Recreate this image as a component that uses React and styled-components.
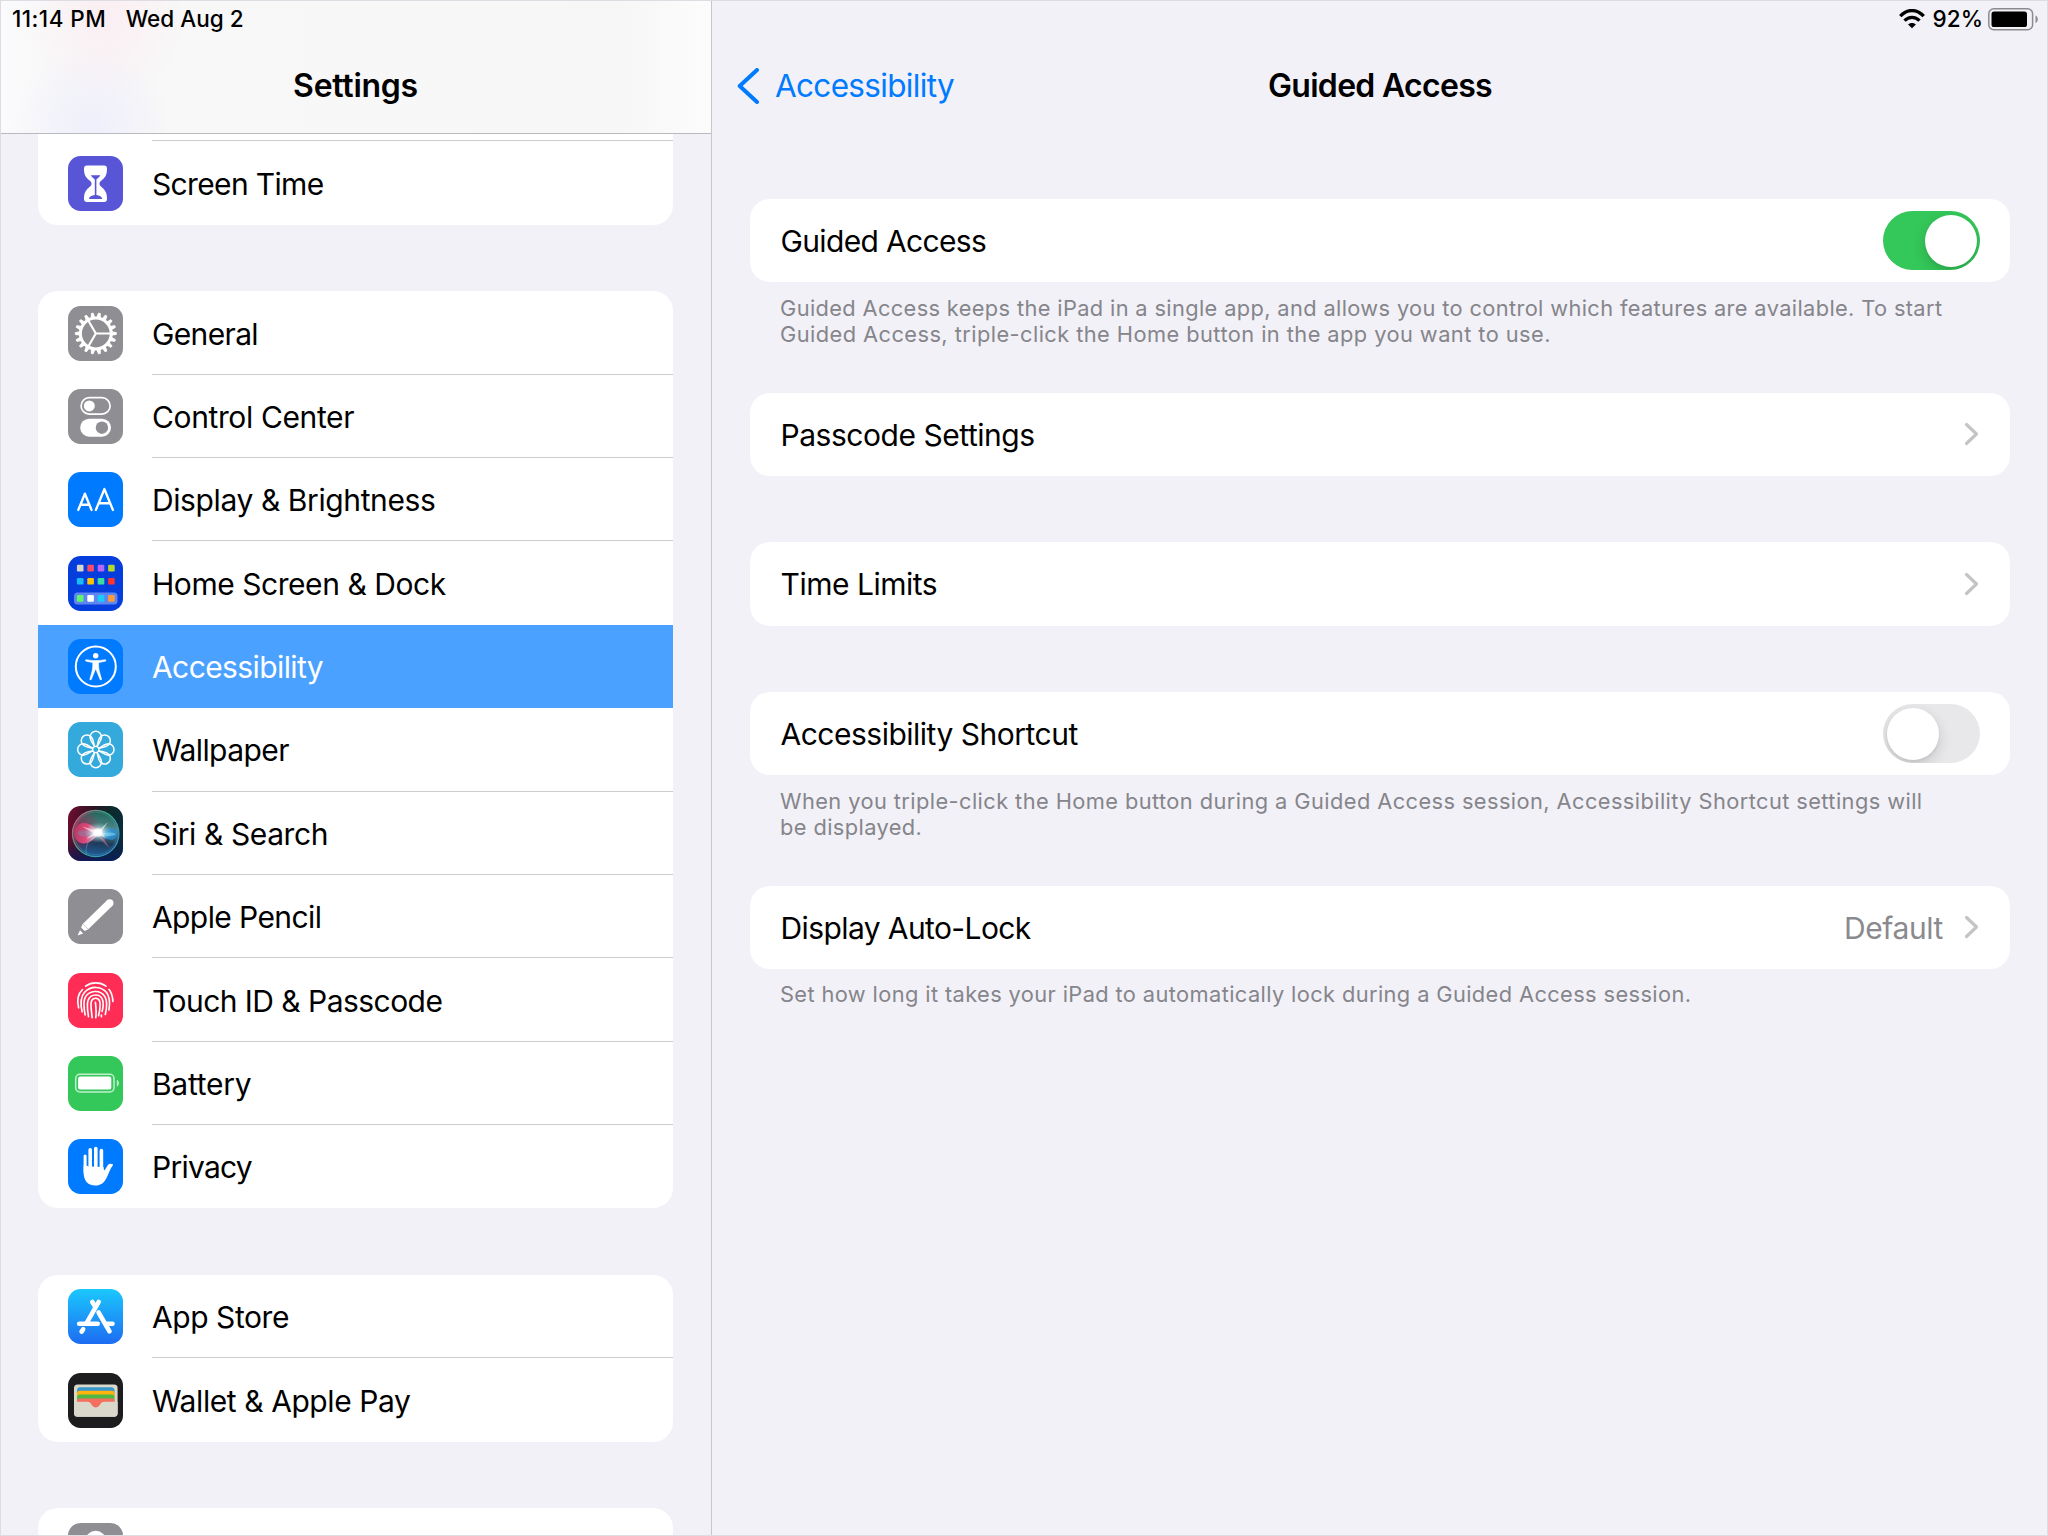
import React from 'react';
import styled, { createGlobalStyle } from 'styled-components';

const GlobalStyle = createGlobalStyle`
  *, *::before, *::after { box-sizing: border-box; }
  html, body { margin: 0; padding: 0; background: #f2f1f7; }
  body { font-family: Inter, "Noto Sans", "Liberation Sans", sans-serif; color: #000; }
`;

const Screen = styled.div`
  position: relative;
  display: flex;
  width: 2048px;
  height: 1536px;
  overflow: hidden;
  background: #f2f1f7;
`;

const ScreenEdge = styled.div`
  position: absolute;
  inset: 0;
  border: 1px solid #dddce3;
  pointer-events: none;
`;

const Sidebar = styled.aside`
  display: flex;
  flex-direction: column;
  flex: none;
  width: 712px;
  height: 1536px;
  border-right: 1px solid #c6c6cb;
  overflow: hidden;
`;

const SidebarHeader = styled.header`
  flex: none;
  height: 134px;
  border-bottom: 1px solid #b9b9be;
  background:
    radial-gradient(ellipse 80px 90px at 105px 14px, rgba(255, 225, 236, 0.42), rgba(255, 225, 236, 0)),
    radial-gradient(ellipse 80px 80px at 92px 126px, rgba(226, 228, 255, 0.45), rgba(226, 228, 255, 0)),
    linear-gradient(90deg, #fbfafc 0, #f8f8f8 60px, #f7f7f7 620px, #fcfcfc 711px);
`;

const StatusBar = styled.div`
  display: flex;
  align-items: center;
  height: 38px;
  padding: ${(p) => (p.$end ? '0 9px 0 0' : '0 0 0 12px')};
  justify-content: ${(p) => (p.$end ? 'flex-end' : 'flex-start')};
  font-size: 22.5px;
  font-weight: 500;
  line-height: 38px;
`;

const StatusText = styled.span`
  letter-spacing: ${(p) => p.$tracking || 0}px;
  margin-left: ${(p) => p.$before || 0}px;
  margin-right: ${(p) => p.$gap || 0}px;
  white-space: nowrap;
`;

const NavTitle = styled.h1`
  margin: 0;
  font-size: 32px;
  font-weight: 600;
  line-height: 95px;
  letter-spacing: ${(p) => p.$tracking || 0}px;
  text-align: center;
  white-space: nowrap;
`;

const GroupList = styled.div`
  display: flex;
  flex-direction: column;
  gap: 66.6px;
  padding: 0 38px;
`;

const Clip = styled.div`
  flex: 1;
  min-height: 0;
  overflow: hidden;
`;

const Card = styled.section`
  flex: none;
  overflow: hidden;
  background: #fff;
  border-radius: ${(p) => (p.$cut ? '0 0 20px 20px' : '20px')};
  padding-top: ${(p) => (p.$cut ? '7.4px' : '0')};
`;

const Item = styled.div`
  display: flex;
  align-items: center;
  height: 83.38px;
  padding-left: 30px;
  background: ${(p) => (p.$selected ? '#4ba1ff' : 'transparent')};
  color: ${(p) => (p.$selected ? '#fff' : '#000')};
`;

const ItemBody = styled.div`
  display: flex;
  align-items: center;
  flex: 1;
  height: calc(100% + 2px);
  margin: -1px 0 -1px 29px;
  border-top: 1px solid ${(p) => (p.$line ? '#cbcbcd' : 'transparent')};
`;

const Label = styled.span`
  font-size: ${(p) => p.$size || 30}px;
  line-height: 40px;
  letter-spacing: ${(p) => p.$tracking || 0}px;
  white-space: nowrap;
`;

const Detail = styled.main`
  display: flex;
  flex-direction: column;
  flex: 1;
  min-width: 0;
`;

const NavBar = styled.nav`
  display: grid;
  grid-template-columns: 1fr auto 1fr;
  align-items: center;
  height: 95px;
  padding: 0 25px;
`;

const Back = styled.div`
  display: flex;
  align-items: center;
  gap: 15px;
  color: #007aff;
`;

const Settings = styled.div`
  display: flex;
  flex-direction: column;
  padding: 66px 38px 0;
`;

const Setting = styled.section`
  display: flex;
  flex-direction: column;
  height: ${(p) => p.$height}px;
`;

const SettingRow = styled.div`
  display: flex;
  align-items: center;
  justify-content: space-between;
  flex: none;
  height: 83.4px;
  padding: 0 30px 0 30.5px;
  background: #fff;
  border-radius: 20px;
`;

const SettingLabel = styled(Label)`
  padding-top: 1px;
`;

const Trailing = styled.div`
  display: flex;
  align-items: center;
  gap: 21px;
  padding-right: 1px;
  color: #8a8a8e;
`;

const Footer = styled.p`
  margin: 0;
  padding: 12.5px 0 0 30px;
  color: #85858b;
  font-size: 21.8px;
  line-height: 26.6px;
`;

const FooterLine = styled.span`
  display: block;
  letter-spacing: ${(p) => p.$tracking || 0}px;
  white-space: nowrap;
`;

const Track = styled.div`
  display: flex;
  justify-content: ${(p) => (p.$on ? 'flex-end' : 'flex-start')};
  width: 97px;
  height: 59px;
  padding: 3.5px;
  border-radius: 30px;
  overflow: hidden;
  background: ${(p) => (p.$on ? '#34c759' : '#e8e8ea')};
`;

const Knob = styled.div`
  width: 52px;
  height: 52px;
  border-radius: 50%;
  background: #fff;
  box-shadow: 0 5px 14px rgba(0, 0, 0, 0.15), 0 2px 3px rgba(0, 0, 0, 0.06);
`;

const IconSvg = styled.svg`
  flex: none;
  display: block;
`;

function Tile({ fill, children }) {
  return (
    <IconSvg width="55" height="55" viewBox="0 0 55 55" fill="none">
      <rect width="55" height="55" rx="12.5" fill={fill} />
      {children}
    </IconSvg>
  );
}

const range = (n) => Array.from({ length: n }, (_, i) => i);

const ScreenTimeIcon = () => (
  <Tile fill="#5856d6">
    <path
      fill="#fff"
      d="M19 9.5h17c2 0 3 1.200 3 3 0 6-1.500 8.500-5 11.500-2 1.700-2.500 2.300-2.500 3.700s.5 2 2.500 3.700c3.500 3 5 5.500 5 11.500 0 1.800-1 3-3 3H19c-2 0-3-1.200-3-3 0-6 1.500-8.500 5-11.500 2-1.700 2.500-2.300 2.500-3.700s-.5-2-2.500-3.700c-3.500-3-5-5.500-5-11.500 0-1.800 1-3 3-3z"
    />
    <path fill="#5856d6" d="M22.800 19.300h9.600c-.8 1.600-1.900 2.500-4 4.300v15.300c3.300.5 5.200 1.400 5.900 4H20.900c.7-2.600 2.600-3.500 5.900-4V23.600c-2.100-1.800-3.200-2.700-4-4.300z" />
  </Tile>
);

const GeneralIcon = () => (
  <Tile fill="#8e8e93">
    <g stroke="#fff" transform="translate(27.800 27.500)">
      <circle r="15.400" strokeWidth="3" />
      {range(18).map((i) => (
        <path key={i} d="M16-1.700l4.500.8v1.800l-4.500.8z" fill="#fff" strokeWidth=".9" strokeLinejoin="round" transform={`rotate(${i * 20})`} />
      ))}
      {range(3).map((i) => (
        <path key={i} d="M0 0H15" strokeWidth="2.200" transform={`rotate(${i * 120})`} />
      ))}
    </g>
  </Tile>
);

const ControlIcon = () => (
  <Tile fill="#8e8e93">
    <rect x="13.100" y="8.700" width="29" height="16.400" rx="8.200" stroke="#fff" strokeWidth="1.700" />
    <circle cx="21.300" cy="16.900" r="5.500" fill="#fff" />
    <rect x="12.200" y="29.700" width="30.800" height="18" rx="9" fill="#fff" />
    <circle cx="33.900" cy="38.700" r="6.200" fill="#8e8e93" />
  </Tile>
);

const DisplayIcon = () => (
  <Tile fill="#007aff">
    <g stroke="#fff" strokeLinecap="round" strokeLinejoin="round">
      <path d="M10.300 37.900l6.600-16.200 6.600 16.200M12.600 32.700h8.600" strokeWidth="2.400" />
      <path d="M27.900 37.900l8.500-20.800 8.500 20.800M30.800 31.300h11.200" strokeWidth="2.400" />
    </g>
  </Tile>
);

const DOCK = ['#5ff56c', '#fff', '#18cdfd', '#ff9a3c'];
const APPS = ['#d9d6cc', '#ff4b63', '#b765fb', '#b3d82f', '#17bdfb', '#ffc400', '#3cdca0', '#ff352d'];

const HomeIcon = () => (
  <Tile fill="#063ede">
    <rect x="6" y="36.500" width="43.500" height="12" rx="3.500" fill="#5d86f0" />
    {APPS.map((c, i) => (
      <rect key={i} x={8.900 + (i % 4) * 10.400} y={i < 4 ? 8.800 : 22} width="6.600" height="6.600" rx="1.200" fill={c} />
    ))}
    {DOCK.map((c, i) => (
      <rect key={i} x={8.900 + i * 10.400} y="39.100" width="6.600" height="6.600" rx="1.200" fill={c} />
    ))}
  </Tile>
);

const AccessibilityIcon = () => (
  <Tile fill="#007aff">
    <circle cx="27.800" cy="27.500" r="20" stroke="#fff" strokeWidth="2" />
    <circle cx="27.700" cy="16.800" r="2.700" fill="#fff" />
    <path
      fill="#fff"
      stroke="#fff"
      strokeWidth=".6"
      strokeLinejoin="round"
      d="M18.300 20.700c3.300.5 6.200.9 9.400.9s6.100-.4 9.400-.9c1-.1 1.200 1.300.2 1.500l-6 1.200c-.5.1-.7.400-.7.900 0 3.700.3 6.500 1.200 9.700l1.700 6c.3 1-1 1.400-1.400.4l-3.900-9.500c-.2-.5-.8-.5-1 0l-3.900 9.500c-.4 1-1.700.6-1.400-.4l1.700-6c.9-3.200 1.200-6 1.200-9.700 0-.5-.2-.8-.7-.9l-6-1.200c-1-.2-.8-1.600.2-1.500z"
    />
  </Tile>
);

const WallpaperIcon = () => (
  <Tile fill="#34aadc">
    <g stroke="#fff" strokeWidth="1.500" transform="translate(27.800 27.500)">
      {range(8).map((i) => (
        <path
          key={i}
          d="M-1.200-2.800C-2.200-5.500-5.700-8.800-5.700-12.500a5.700 5.700 0 0 1 11.400 0C5.700-8.800 2.200-5.500 1.200-2.800"
          transform={`rotate(${i * 45})`}
        />
      ))}
      <circle r="3.100" strokeWidth="1.300" />
    </g>
  </Tile>
);

const SiriIcon = () => (
  <IconSvg width="55" height="55" viewBox="0 0 55 55" fill="none">
    <defs>
      <linearGradient id="siriBack" x1="0" y1=".3" x2="1" y2=".5">
        <stop offset="0" stopColor="#6b0d2e" />
        <stop offset=".4" stopColor="#2b1424" />
        <stop offset=".7" stopColor="#0b2a2b" />
        <stop offset="1" stopColor="#0b2c3b" />
      </linearGradient>
      <linearGradient id="siriFoot" x1="0" y1="0" x2="0" y2="1">
        <stop offset=".6" stopColor="#06194f" stopOpacity="0" />
        <stop offset="1" stopColor="#0b1a66" stopOpacity=".75" />
      </linearGradient>
      <linearGradient id="siriOrb" x1=".55" y1="0" x2=".45" y2="1">
        <stop offset="0" stopColor="#1b6256" />
        <stop offset=".4" stopColor="#55888a" />
        <stop offset=".7" stopColor="#1c3c5a" />
        <stop offset="1" stopColor="#225f9e" />
      </linearGradient>
      <linearGradient id="siriRing" x1="0" y1=".2" x2="1" y2=".8">
        <stop offset="0" stopColor="#c9627f" />
        <stop offset=".5" stopColor="#38a98d" />
        <stop offset="1" stopColor="#3b8fd6" />
      </linearGradient>
      <radialGradient id="siriBlush" cx=".12" cy=".4" r=".5">
        <stop offset="0" stopColor="#96224c" stopOpacity=".95" />
        <stop offset="1" stopColor="#96224c" stopOpacity="0" />
      </radialGradient>
      <linearGradient id="siriPink" x1="0" y1=".4" x2="1" y2=".6">
        <stop offset="0" stopColor="#c03a66" />
        <stop offset=".5" stopColor="#ea4a7c" />
        <stop offset="1" stopColor="#ffc3d6" />
      </linearGradient>
      <radialGradient id="siriGlow">
        <stop offset="0" stopColor="#fff" />
        <stop offset=".25" stopColor="#fff" stopOpacity=".9" />
        <stop offset=".6" stopColor="#d6f4f5" stopOpacity=".35" />
        <stop offset="1" stopColor="#9fe3e8" stopOpacity="0" />
      </radialGradient>
    </defs>
    <rect width="55" height="55" rx="12.500" fill="url(#siriBack)" />
    <rect width="55" height="55" rx="12.500" fill="url(#siriFoot)" />
    <circle cx="27.700" cy="27.500" r="23.200" fill="url(#siriOrb)" />
    <circle cx="27.700" cy="27.500" r="23.200" fill="url(#siriBlush)" stroke="url(#siriRing)" strokeWidth="1.300" />
    <circle cx="27.700" cy="27.500" r="21.300" stroke="url(#siriRing)" strokeWidth=".7" opacity=".6" />
    <path d="M31 27c-5-7-12-11.500-18-9.500-9.500 3.500-8.500 19.500 2.500 20 6.500.2 11-5 15.500-10.500z" fill="url(#siriPink)" opacity=".9" />
    <path d="M9 27c2.500-4 12-3 20 0-6 4-16 6-20 0z" fill="#5aa9c4" opacity=".35" />
    <path d="M30 27.500c5 0 8-5.500 13-5.500 6 0 7.500 6.500 4.500 10-4 4-10 1-17.500-4.500z" fill="#2a92e0" opacity=".75" />
    <path d="M30 27.500c5 .8 11-2.800 18 .4-5 3.500-11 2.500-18-.4z" fill="#78daf5" opacity=".6" />
    <path d="M27 29C19 34 17 43 18.500 48.500" stroke="#4f9ad8" strokeWidth="1" opacity=".6" />
    <path d="M30 28l6 5 5.500 9-8.500-8z" fill="#c06a94" opacity=".65" />
    <ellipse cx="30" cy="26.500" rx="14" ry="10" fill="url(#siriGlow)" />
    <path d="M14 20.500l16 4.500 10-9-6.500 9.500 4 6.500-7.500-3.500-12 4.500 7.500-6z" fill="#fff" opacity=".55" />
    <circle cx="30" cy="26.500" r="4" fill="#fff" opacity=".7" />
  </IconSvg>
);

const PencilIcon = () => (
  <Tile fill="#8e8e93">
    <path d="M17.600 37.500L41.500 14.200" stroke="#fff" strokeWidth="7.600" />
    <circle cx="41.700" cy="14.100" r="3.800" fill="#fff" />
    <path fill="#fff" d="M14.700 34.800l5.400 5.600-3.500 1.700-3.500-3.600zM12 41.200l3.200 3.200-5.600 2.200z" />
  </Tile>
);

const TouchIcon = () => (
  <Tile fill="#ff2d55">
    <g stroke="#fff" strokeWidth="1.650" strokeLinecap="round" transform="translate(-.2 0)">
      <path d="M17.800 13.200c6-4.400 14.400-4.400 20.400 0" />
      <path d="M10.800 34.800c-1.600-6.500-1.200-13.500 3.900-18.300M41.300 16.500c2.400 3 3.600 7 3.800 12" />
      <path d="M14.300 38.800c-1.500-6.500-2-14.500 2.500-19.500 6-6.600 16.600-6.400 22 .2 3.400 4.600 3.300 11.500 2.300 17.500" />
      <path d="M17.300 41.800c-1-5.500-2.300-13 .2-17.600 4-7.300 15.200-7.800 19.600-.6 2.500 4.300 1.800 11.900.4 17.900" />
      <path d="M20.700 43.600c-.7-5-2-11.500-.4-16.300 2.600-7 12.300-7 14.500-.3 1 3.600.5 8-.5 11.500M33.600 42v1.800" />
      <path d="M24.300 44.600c-.5-6-1.800-12-.8-16 1.300-4.500 7.500-4.400 8.500 0 .8 4.800 0 9.400-1.200 14" />
      <path d="M27.600 29.300c.7 5 1 10 .4 15.300" />
    </g>
  </Tile>
);

const BatteryIcon = () => (
  <Tile fill="#34c759">
    <rect x="7.700" y="18.200" width="38.300" height="17.800" rx="4.200" stroke="#fff" strokeOpacity=".7" strokeWidth="1.500" />
    <rect x="10.100" y="20.600" width="33.200" height="13" rx="2.200" fill="#fff" />
    <path fill="#fff" opacity=".7" d="M48.800 23.800c2.800 1.300 2.800 5.600 0 6.900z" />
  </Tile>
);

const PrivacyIcon = () => (
  <Tile fill="#007aff">
    <g stroke="#fff" strokeLinecap="round">
      <path d="M17.100 17v16" strokeWidth="3" />
      <path d="M22.200 10.800v18M27.800 9.600v18M33.400 11.600v18" strokeWidth="3.600" />
    </g>
    <path
      fill="#fff"
      d="M15.600 26.500h2.900l1.900 1 15 .5c.6 1.300.2 3.300.8 3.300.9 0 2.200-3.300 3.300-4.900 1.200-1.700 3.200-2.200 5.300-1.200.4.300.3.800-.1 1.200-2.200 2.500-3.300 6.500-5.500 11-3 6.500-6.200 9-12 9-7.700 0-11.600-5-11.600-12.900z"
    />
  </Tile>
);

const AppStoreIcon = () => (
  <IconSvg width="55" height="55" viewBox="0 0 55 55" fill="none">
    <defs>
      <linearGradient id="storeBack" x1="0" y1="0" x2="0" y2="1">
        <stop offset="0" stopColor="#1bc8fd" />
        <stop offset="1" stopColor="#1d6cf2" />
      </linearGradient>
    </defs>
    <rect width="55" height="55" rx="12.500" fill="url(#storeBack)" />
    <path d="M30.700 12.900L19 33.300M15.200 40.200l-1.600 2.400" stroke="#fff" strokeWidth="4.600" strokeLinecap="round" />
    <path d="M24.300 12.900l2.400 3.800M30.600 23.500l10.900 18.800" stroke="#fff" strokeWidth="4.600" strokeLinecap="round" />
    <path d="M11.200 34.800h18.500M38.500 34.800h6" stroke="#fff" strokeWidth="4.600" strokeLinecap="round" />
  </IconSvg>
);

const WalletIcon = () => (
  <Tile fill="#1d1d1f">
    <rect x="6" y="11.500" width="43.600" height="32.200" rx="3.500" fill="#dad7cb" />
    <path fill="#3997cd" d="M9 17.500c0-2 1-3.300 3-3.300h31.500c2 0 3 1.300 3 3.300v5H9z" />
    <path fill="#ffb30f" d="M9 20.200c0-1.500 1-2.400 2.600-2.400h32.300c1.600 0 2.600.9 2.600 2.400v5H9z" />
    <path fill="#4fb944" d="M9 24c0-1.500 1-2.400 2.600-2.400h32.300c1.600 0 2.600.9 2.600 2.400v5H9z" />
    <path fill="#f56f5e" d="M9 27.700c0-1.500 1-2.300 2.600-2.300h32.300c1.600 0 2.600.8 2.600 2.300v8H9z" />
    <path
      fill="#dad7cb"
      d="M6 28.700h13.500c2.500 0 3.200 1.600 4.300 3.400 1 1.600 2.400 2.500 4 2.500s3-.9 4-2.500c1.100-1.800 1.800-3.400 4.300-3.400h13.500v11.500c0 2-1.500 3.500-3.500 3.500H9.500c-2 0-3.500-1.500-3.500-3.500z"
    />
  </Tile>
);

const PasswordsIcon = () => (
  <Tile fill="#8e8e93">
    <circle cx="27.700" cy="18" r="10.300" fill="#fff" />
    <circle cx="27.700" cy="14.800" r="2.500" fill="#8e8e93" />
    <path fill="#fff" d="M24 26h7.500v18l-3.700 4-3.800-4z" />
  </Tile>
);

const WifiGlyph = () => (
  <IconSvg width="26" height="20" viewBox="0 0 26 20" fill="none">
    <path d="M1.300 7.200C8-.4 18-.4 24.700 7.200" stroke="#000" strokeWidth="3.300" />
    <path d="M5.500 11.700c4.300-4.500 10.700-4.500 15 0" stroke="#000" strokeWidth="3.300" />
    <path fill="#000" d="M13 19.300l-3.900-3.900c2.200-2 5.600-2 7.800 0z" />
  </IconSvg>
);

const BatteryGlyph = () => (
  <IconSvg width="51" height="23" viewBox="0 0 51 23" fill="none">
    <rect x=".8" y=".8" width="43.800" height="21" rx="5" stroke="#8b8b8f" strokeWidth="1.500" />
    <rect x="3.500" y="3.500" width="35.500" height="15.600" rx="2.600" fill="#000" />
    <path fill="#8b8b8f" d="M47.500 7.500c3 1.200 3 6.400 0 7.600z" />
  </IconSvg>
);

const BackChevron = () => (
  <IconSvg width="23" height="36" viewBox="0 0 23 36" fill="none">
    <path d="M20 2L2.700 18 20 34" stroke="#007aff" strokeWidth="4" strokeLinecap="round" strokeLinejoin="round" />
  </IconSvg>
);

const Chevron = () => (
  <IconSvg width="15" height="24" viewBox="0 0 15 24" fill="none">
    <path d="M2.500 2.500L12.500 12l-10 9.500" stroke="#c4c4c7" strokeWidth="3.200" strokeLinecap="round" strokeLinejoin="round" />
  </IconSvg>
);

const GROUPS = [
  [{ icon: ScreenTimeIcon, label: 'Screen Time', line: true, tracking: -0.65 }],
  [
    { icon: GeneralIcon, label: 'General', tracking: -0.65 },
    { icon: ControlIcon, label: 'Control Center', line: true, tracking: -0.38 },
    { icon: DisplayIcon, label: 'Display & Brightness', line: true, tracking: -0.4 },
    { icon: HomeIcon, label: 'Home Screen & Dock', line: true, tracking: -0.45 },
    { icon: AccessibilityIcon, label: 'Accessibility', selected: true, tracking: -0.6 },
    { icon: WallpaperIcon, label: 'Wallpaper', tracking: -0.58 },
    { icon: SiriIcon, label: 'Siri & Search', line: true, tracking: -0.4 },
    { icon: PencilIcon, label: 'Apple Pencil', line: true, tracking: -0.6 },
    { icon: TouchIcon, label: 'Touch ID & Passcode', line: true, tracking: -0.54 },
    { icon: BatteryIcon, label: 'Battery', line: true, tracking: -0.28 },
    { icon: PrivacyIcon, label: 'Privacy', line: true, tracking: -0.75 },
  ],
  [
    { icon: AppStoreIcon, label: 'App Store', tracking: -0.44 },
    { icon: WalletIcon, label: 'Wallet & Apple Pay', line: true, tracking: -0.42 },
  ],
  [{ icon: PasswordsIcon, label: '' }],
];

const SETTINGS = [
  {
    label: 'Guided Access',
    tracking: -0.65,
    toggle: 'on',
    height: 193.6,
    footer: [
      ['Guided Access keeps the iPad in a single app, and allows you to control which features are available. To start', 0.365],
      ['Guided Access, triple-click the Home button in the app you want to use.', 0.44],
    ],
  },
  { label: 'Passcode Settings', tracking: -0.46, height: 149.6 },
  { label: 'Time Limits', tracking: -0.48, height: 149.8 },
  {
    label: 'Accessibility Shortcut',
    tracking: -0.5,
    toggle: 'off',
    height: 193.6,
    footer: [
      ['When you triple-click the Home button during a Guided Access session, Accessibility Shortcut settings will', 0.42],
      ['be displayed.', 0.4],
    ],
  },
  {
    label: 'Display Auto-Lock',
    tracking: -0.6,
    value: 'Default',
    height: 160,
    footer: [['Set how long it takes your iPad to automatically lock during a Guided Access session.', 0.39]],
  },
];

function Toggle({ on }) {
  return (
    <Track $on={on}>
      <Knob />
    </Track>
  );
}

export default function App() {
  return (
    <>
      <GlobalStyle />
      <Screen>
        <Sidebar>
          <SidebarHeader>
            <StatusBar>
              <StatusText $gap={19.5} $tracking={0.45}>11:14 PM</StatusText>
              <StatusText>Wed Aug 2</StatusText>
            </StatusBar>
            <NavTitle $tracking={-0.25}>Settings</NavTitle>
          </SidebarHeader>
          <Clip>
            <GroupList>
              {GROUPS.map((items, g) => (
                <Card key={g} $cut={g === 0}>
                  {items.map(({ icon: Icon, label, line, selected, tracking }, i) => (
                    <Item key={i} $selected={selected}>
                      <Icon />
                      <ItemBody $line={line}>
                        <Label $tracking={tracking}>{label}</Label>
                      </ItemBody>
                    </Item>
                  ))}
                </Card>
              ))}
            </GroupList>
          </Clip>
        </Sidebar>
        <Detail>
          <StatusBar $end>
            <WifiGlyph />
            <StatusText $before={8} $gap={5}>92%</StatusText>
            <BatteryGlyph />
          </StatusBar>
          <NavBar>
            <Back>
              <BackChevron />
              <Label $size={31.5} $tracking={-0.68}>Accessibility</Label>
            </Back>
            <NavTitle $tracking={-0.7}>Guided Access</NavTitle>
          </NavBar>
          <Settings>
            {SETTINGS.map(({ label, toggle, value, height, footer, tracking }) => (
              <Setting key={label} $height={height}>
                <SettingRow>
                  <SettingLabel $tracking={tracking}>{label}</SettingLabel>
                  {toggle ? (
                    <Toggle on={toggle === 'on'} />
                  ) : (
                    <Trailing>
                      {value && <SettingLabel $tracking={-0.4}>{value}</SettingLabel>}
                      <Chevron />
                    </Trailing>
                  )}
                </SettingRow>
                {footer && (
                  <Footer>
                    {footer.map(([text, t]) => (
                      <FooterLine key={text} $tracking={t}>{text}</FooterLine>
                    ))}
                  </Footer>
                )}
              </Setting>
            ))}
          </Settings>
        </Detail>
        <ScreenEdge />
      </Screen>
    </>
  );
}
